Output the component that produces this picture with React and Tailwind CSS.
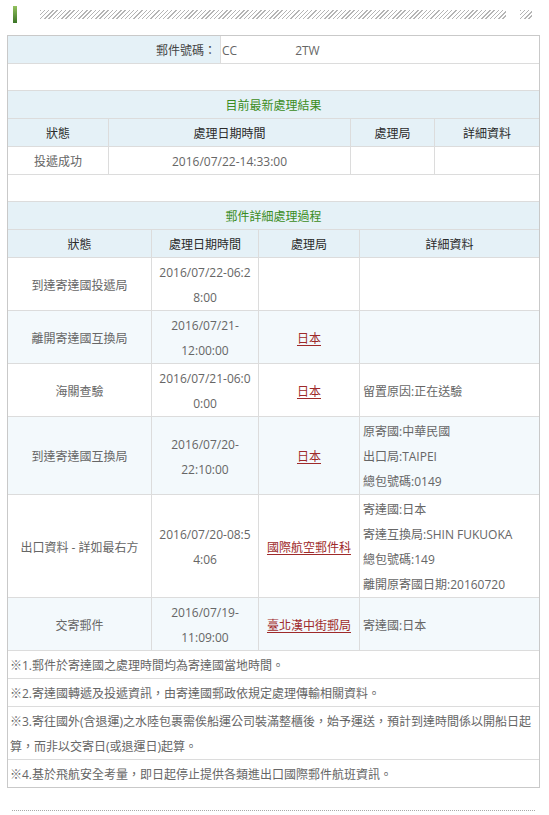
import React from 'react';

const latest = { status: '投遞成功', time: '2016/07/22-14:33:00', office: '', detail: [] };

const history = [
    { status: '到達寄達國投遞局', time: ['2016/07/22-06:2', '8:00'], office: '', detail: [] },
    { status: '離開寄達國互換局', time: ['2016/07/21-', '12:00:00'], office: '日本', detail: [] },
    { status: '海關查驗', time: ['2016/07/21-06:0', '0:00'], office: '日本', detail: ['留置原因:正在送驗'] },
    {
        status: '到達寄達國互換局',
        time: ['2016/07/20-', '22:10:00'],
        office: '日本',
        detail: ['原寄國:中華民國', '出口局:TAIPEI', '總包號碼:0149'],
    },
    {
        status: '出口資料 - 詳如最右方',
        time: ['2016/07/20-08:5', '4:06'],
        office: '國際航空郵件科',
        detail: ['寄達國:日本', '寄達互換局:SHIN FUKUOKA', '總包號碼:149', '離開原寄國日期:20160720'],
    },
    { status: '交寄郵件', time: ['2016/07/19-', '11:09:00'], office: '臺北漢中街郵局', detail: ['寄達國:日本'] },
];

const notes = [
    ['※1.郵件於寄達國之處理時間均為寄達國當地時間。'],
    ['※2.寄達國轉遞及投遞資訊，由寄達國郵政依規定處理傳輸相關資料。'],
    ['※3.寄往國外(含退運)之水陸包裹需俟船運公司裝滿整櫃後，始予運送，預計到達時間係以開船日起', '算，而非以交寄日(或退運日)起算。'],
    ['※4.基於飛航安全考量，即日起停止提供各類進出口國際郵件航班資訊。'],
];

const cell = 'flex items-center justify-center text-center px-1 pt-[2px] leading-[25px] border-r border-[#dcdcdc]';
const lastCell = 'flex flex-col justify-center px-[3px] pt-[2px] leading-[25px] text-left';
const head = 'flex items-center justify-center pt-[2px] leading-[25px] text-[#2a2a2a] border-r border-[#dcdcdc]';

function Office({ name }) {
    if (!name) return null;
    return <span className="text-[#9e2a2a] underline underline-offset-2">{name}</span>;
}

export default function App() {
    return (
        <div className="w-[549px] min-h-[815px] bg-white text-[12px] text-[#666] font-['Open_Sans','Noto_Sans_CJK_TC',sans-serif]">
            {/* top strip */}
            <div className="flex items-start h-[35px] pt-[6px]">
                <div className="ml-[13px] w-[4px] h-[17px] bg-gradient-to-b from-[#93c25e] to-[#3b7426]" />
                <div className="ml-[23px] mt-[4px] h-[9px] w-[466px] bg-[repeating-linear-gradient(135deg,#b5b5b5_0_1px,transparent_1px_3px)]" />
                <div className="ml-[14px] mt-[4px] h-[9px] w-[12px] bg-[repeating-linear-gradient(135deg,#b5b5b5_0_1px,transparent_1px_3px)]" />
            </div>

            <div className="ml-[7px] w-[533px] border border-[#c9c9c9]">
                {/* tracking number */}
                <div className="grid grid-cols-[213px_1fr] border-b border-[#dcdcdc]">
                    <div className="bg-[#e5f1f7] text-right pr-[4px] pt-[2px] leading-[25px] text-[#444] border-r border-[#dcdcdc]">
                        郵件號碼：
                    </div>
                    <div className="pl-[1px] pt-[2px] leading-[25px]">
                        CC<span className="ml-[58px]">2TW</span>
                    </div>
                </div>
                <div className="h-[27px] border-b border-[#dcdcdc]" />

                {/* latest result */}
                <div className="bg-[#e5f1f7] text-center text-[#3a8c22] pt-[2px] leading-[25px] border-b border-[#dcdcdc]">
                    目前最新處理結果
                </div>
                <div className="grid grid-cols-[101px_242px_84px_1fr] bg-[#e5f1f7] border-b border-[#dcdcdc]">
                    <div className={head}>狀態</div>
                    <div className={head}>處理日期時間</div>
                    <div className={head}>處理局</div>
                    <div className={head + ' border-r-0'}>詳細資料</div>
                </div>
                <div className="grid grid-cols-[101px_242px_84px_1fr] border-b border-[#dcdcdc]">
                    <div className={cell}>{latest.status}</div>
                    <div className={cell}>{latest.time}</div>
                    <div className={cell}>
                        <Office name={latest.office} />
                    </div>
                    <div className={lastCell}>{latest.detail.join('')}</div>
                </div>
                <div className="h-[27px] border-b border-[#dcdcdc]" />

                {/* history */}
                <div className="bg-[#e5f1f7] text-center text-[#3a8c22] pt-[2px] leading-[25px] border-b border-[#dcdcdc]">
                    郵件詳細處理過程
                </div>
                <div className="grid grid-cols-[144px_107px_101px_1fr] bg-[#e5f1f7] border-b border-[#dcdcdc]">
                    <div className={head}>狀態</div>
                    <div className={head}>處理日期時間</div>
                    <div className={head}>處理局</div>
                    <div className={head + ' border-r-0'}>詳細資料</div>
                </div>
                {history.map((row, i) => (
                    <div
                        key={i}
                        className={`grid grid-cols-[144px_107px_101px_1fr] border-b border-[#dcdcdc] ${
                            i % 2 === 1 ? 'bg-[#f3f9fc]' : 'bg-white'
                        }`}
                    >
                        <div className={cell}>{row.status}</div>
                        <div className={cell + ' flex-col'}>
                            {row.time.map((t, j) => (
                                <span key={j}>{t}</span>
                            ))}
                        </div>
                        <div className={cell}>
                            <Office name={row.office} />
                        </div>
                        <div className={lastCell}>
                            {row.detail.map((d, j) => (
                                <span key={j}>{d}</span>
                            ))}
                        </div>
                    </div>
                ))}

                {/* notes */}
                {notes.map((lines, i) => (
                    <div
                        key={i}
                        className={`px-[2px] pt-[2px] leading-[25px] ${
                            i < notes.length - 1 ? 'border-b border-[#dcdcdc]' : ''
                        }`}
                    >
                        {lines.map((l, j) => (
                            <div key={j}>{l}</div>
                        ))}
                    </div>
                ))}
            </div>

            <div className="ml-[12px] mt-[22px] w-[523px] border-t border-dotted border-[#a8a8a8]" />
        </div>
    );
}
